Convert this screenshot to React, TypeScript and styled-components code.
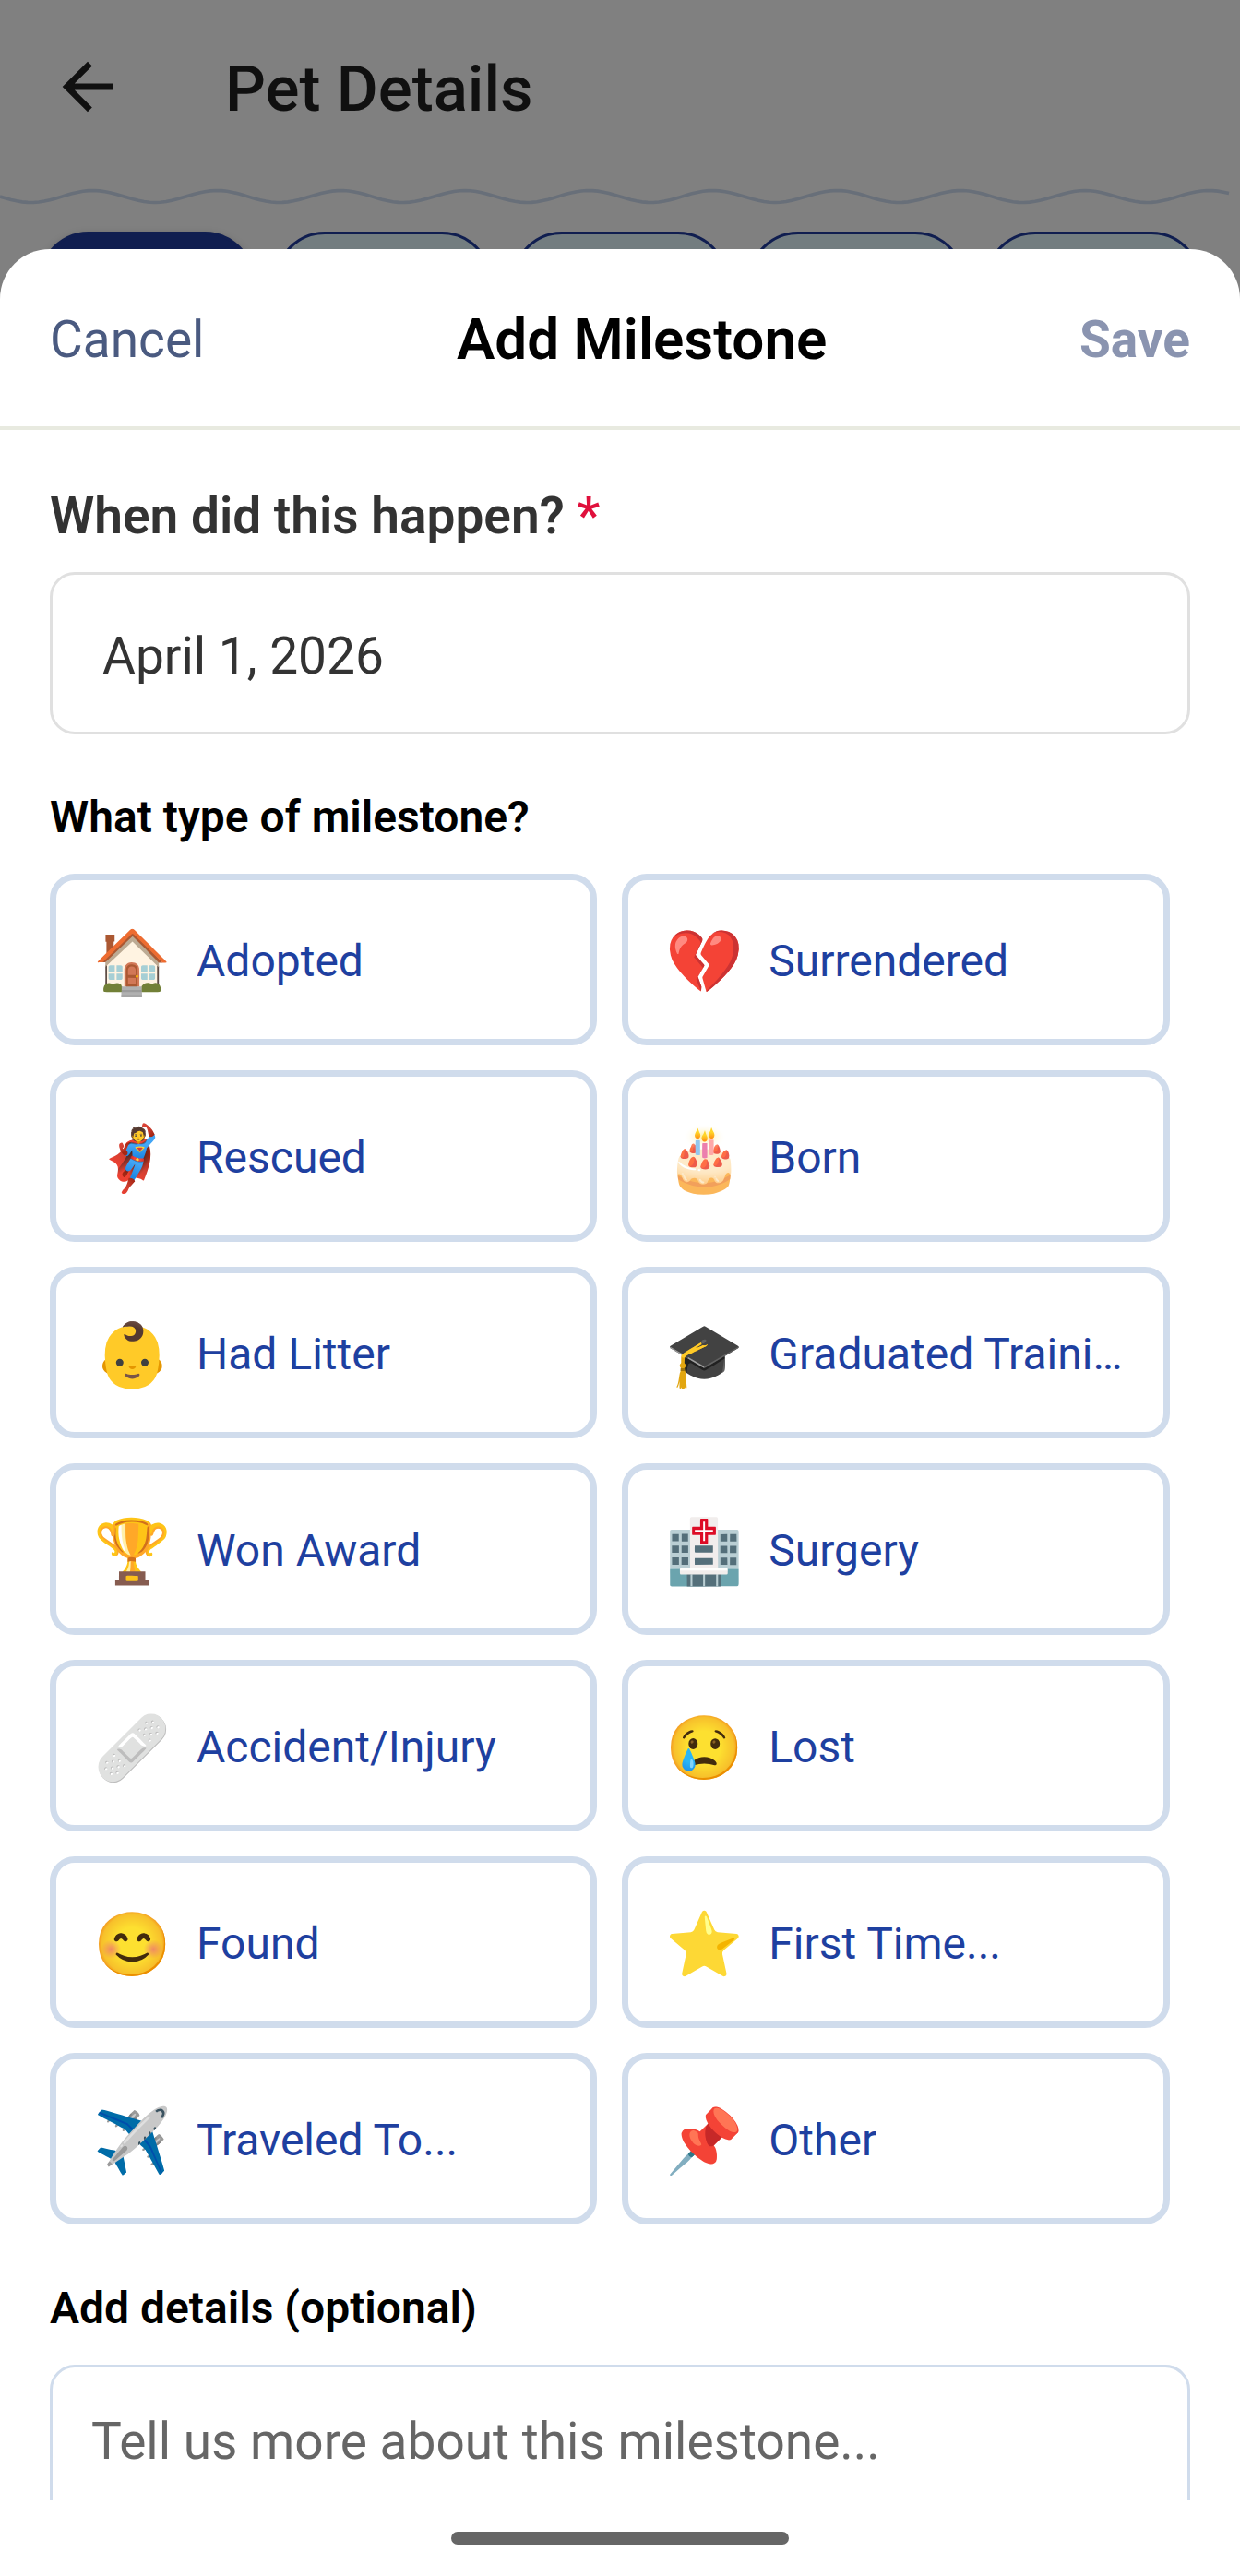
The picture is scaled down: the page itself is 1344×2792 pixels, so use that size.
import React, { useState } from 'react';
import styled, { createGlobalStyle } from 'styled-components';

const GlobalStyle = createGlobalStyle`
  *, *::before, *::after { box-sizing: border-box; }
  body { margin: 0; background: #808080; font-family: Roboto, "Liberation Sans", sans-serif; }
  button, input, textarea { font-family: inherit; margin: 0; }
`;

const Stage = styled.div`
  display: grid;
  grid-template: minmax(0, 1fr) / minmax(0, 1fr);
  height: 100vh;
  overflow: hidden;
`;

const Screen = styled.div`
  grid-area: 1 / 1;
  background: #808080;
`;

const AppBar = styled.header`
  display: flex;
  align-items: center;
  gap: 108px;
  height: 190px;
  padding: 0 54px 2px;
`;

const BackButton = styled.button`
  display: flex;
  border: 0;
  padding: 0;
  background: none;
  color: #101010;
`;

const AppTitle = styled.h1`
  margin: 0;
  padding-top: 5px;
  font-size: 69px;
  line-height: 80px;
  font-weight: 500;
  color: #101010;
`;

const WaveLine = styled.svg`
  display: block;
  width: 100%;
  height: 46px;
`;

const Chips = styled.nav`
  display: flex;
  gap: 22px;
  padding: 15px 42px 0;
`;

const Chip = styled.button<{ $active?: boolean }>`
  flex: 1;
  height: 108px;
  border: 3px solid #101e50;
  border-radius: 54px;
  background: ${(p) => (p.$active ? '#101e50' : '#737d80')};
  box-shadow: ${(p) => (p.$active ? '0 3px 9px rgba(0, 0, 0, 0.25)' : 'none')};
`;

const Sheet = styled.section`
  grid-area: 1 / 1;
  display: flex;
  flex-direction: column;
  margin-top: 270px;
  border-radius: 54px 54px 0 0;
  background: #fff;
  z-index: 1;
  overflow: hidden;
`;

const SheetHeader = styled.header`
  display: flex;
  flex: none;
  align-items: center;
  justify-content: space-between;
  height: 196px;
  padding: 4px 54px 0;
  border-bottom: 4px solid #e8eae0;
`;

const SheetTitle = styled.h2`
  margin: 0;
  font-size: 62px;
  line-height: 72px;
  font-weight: 600;
  color: #000;
`;

const HeaderAction = styled.button<{ $strong?: boolean }>`
  border: 0;
  padding: 0;
  background: none;
  font-size: 55px;
  line-height: 64px;
  font-weight: ${(p) => (p.$strong ? 700 : 400)};
  color: ${(p) => (p.$strong ? '#8a94b0' : '#4a5a80')};
`;

const Form = styled.form`
  flex: 1;
  min-height: 0;
  overflow: hidden;
  padding: 61px 54px 0;
`;

const DateLabel = styled.label`
  display: block;
  margin-bottom: 29px;
  font-size: 55px;
  line-height: 64px;
  font-weight: 600;
  color: #333;
`;

const Required = styled.span`
  color: #e0103c;
`;

const DateInput = styled.input`
  display: block;
  width: 100%;
  height: 176px;
  margin-bottom: 63px;
  padding: 5px 54px 0;
  border: 3px solid #e0e0e0;
  border-radius: 27px;
  background: #fff;
  font-size: 55px;
  color: #333;
  outline: none;
`;

const sectionTitle = `
  display: block;
  margin: 0 0 34px;
  padding: 0;
  font-size: 48px;
  line-height: 54px;
  font-weight: 600;
  color: #000;
`;

const SectionTitle = styled.h3`${sectionTitle}`;
const SectionLabel = styled.label`${sectionTitle}`;

const Options = styled.div`
  display: grid;
  grid-template-columns: 48% 48%;
  gap: 27px;
  margin-bottom: 64px;
`;

const Option = styled.button`
  display: flex;
  align-items: center;
  gap: 28px;
  min-width: 0;
  height: 186px;
  padding: 4px 40px 0;
  border: 7px solid #d0dcec;
  border-radius: 27px;
  background: #fff;
  text-align: left;
`;

const OptionIcon = styled.span`
  flex: none;
  width: 84px;
  padding-top: 2px;
  font-size: 68px;
  line-height: 80px;
`;

const OptionText = styled.span`
  min-width: 0;
  overflow: hidden;
  text-overflow: ellipsis;
  white-space: nowrap;
  font-size: 48px;
  line-height: 56px;
  color: #1e40a0;
`;

const Details = styled.textarea`
  display: block;
  width: 100%;
  height: 340px;
  padding: 48px 42px;
  border: 3px solid #d0dcec;
  border-radius: 27px;
  background: #fff;
  font-size: 55px;
  line-height: 64px;
  resize: none;
  outline: none;
  &::placeholder { color: #666; opacity: 1; }
`;

const HomeBar = styled.footer`
  display: flex;
  flex: none;
  justify-content: center;
  height: 82px;
  padding-top: 34px;
`;

const HomeHandle = styled.div`
  width: 366px;
  height: 14px;
  border-radius: 7px;
  background: #666;
`;

const options: { icon: string; label: string }[] = [
  { icon: '🏠', label: 'Adopted' },
  { icon: '💔', label: 'Surrendered' },
  { icon: '🦸', label: 'Rescued' },
  { icon: '🎂', label: 'Born' },
  { icon: '👶', label: 'Had Litter' },
  { icon: '🎓', label: 'Graduated Training' },
  { icon: '🏆', label: 'Won Award' },
  { icon: '🏥', label: 'Surgery' },
  { icon: '🩹', label: 'Accident/Injury' },
  { icon: '😢', label: 'Lost' },
  { icon: '😊', label: 'Found' },
  { icon: '⭐', label: 'First Time...' },
  { icon: '✈️', label: 'Traveled To...' },
  { icon: '📌', label: 'Other' },
];

// Ten full sine periods across the width, sampled every 6 units.
const wave = Array.from({ length: 223 }, (_, i) => {
  const x = i * 6;
  return `${x ? 'L' : 'M'}${x} ${(23 + 6.5 * Math.sin((x * Math.PI * 20) / 1344)).toFixed(2)}`;
}).join('');

export default function App() {
  const [picked, setPicked] = useState<string | null>(null);
  return (
    <>
      <GlobalStyle />
      <Stage>
        <Screen>
          <AppBar>
            <BackButton aria-label="Back">
              <svg width="82" height="82" viewBox="0 0 24 24" fill="currentColor">
                <path d="M20 11H7.83l5.59-5.59L12 4l-8 8 8 8 1.41-1.41L7.83 13H20v-2z" />
              </svg>
            </BackButton>
            <AppTitle>Pet Details</AppTitle>
          </AppBar>
          <WaveLine viewBox="0 0 1344 46" preserveAspectRatio="none" aria-hidden="true">
            <path d={wave} fill="none" stroke="#686f79" strokeWidth="3.6" />
          </WaveLine>
          <Chips>
            <Chip $active aria-label="Tab 1" />
            <Chip aria-label="Tab 2" />
            <Chip aria-label="Tab 3" />
            <Chip aria-label="Tab 4" />
            <Chip aria-label="Tab 5" />
          </Chips>
        </Screen>
        <Sheet>
          <SheetHeader>
            <HeaderAction type="button">Cancel</HeaderAction>
            <SheetTitle>Add Milestone</SheetTitle>
            <HeaderAction type="button" $strong>Save</HeaderAction>
          </SheetHeader>
          <Form>
            <DateLabel htmlFor="date">When did this happen? <Required>*</Required></DateLabel>
            <DateInput id="date" readOnly value="April 1, 2026" />
            <SectionTitle>What type of milestone?</SectionTitle>
            <Options>
              {options.map((o) => (
                <Option key={o.label} type="button" aria-pressed={picked === o.label} onClick={() => setPicked(o.label)}>
                  <OptionIcon>{o.icon}</OptionIcon>
                  <OptionText>{o.label}</OptionText>
                </Option>
              ))}
            </Options>
            <SectionLabel htmlFor="details">Add details (optional)</SectionLabel>
            <Details id="details" placeholder="Tell us more about this milestone..." />
          </Form>
          <HomeBar><HomeHandle /></HomeBar>
        </Sheet>
      </Stage>
    </>
  );
}
